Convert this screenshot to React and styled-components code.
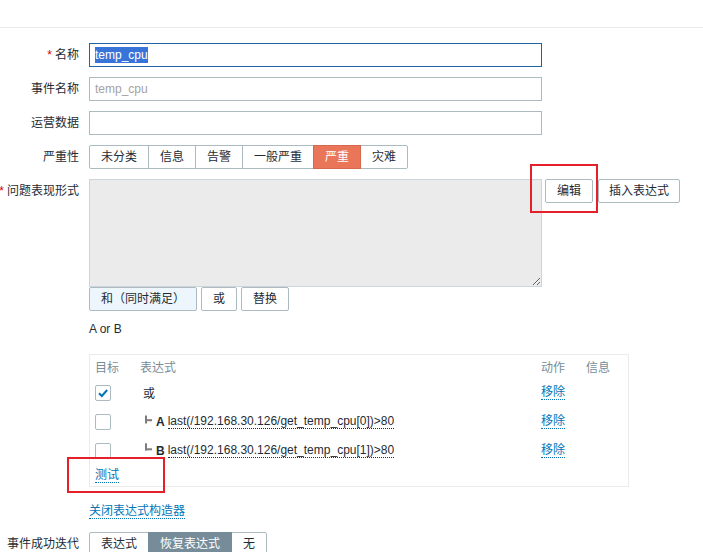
import React from 'react';
import styled, { createGlobalStyle } from 'styled-components';

const FONT = `"Liberation Sans", Arial, "Noto Sans CJK SC", sans-serif`;

const Global = createGlobalStyle`
  html, body { margin: 0; padding: 0; background: #fff; }
  body { font-family: ${FONT}; font-size: 12px; color: #1f2c33; }
  * { box-sizing: border-box; }
`;

const Page = styled.div`
  position: relative;
  width: 703px;
  height: 552px;
  overflow: hidden;
`;

const TopBar = styled.div`
  height: 28px;
  border-bottom: 1px solid #ebebeb;
`;

const Form = styled.div`
  display: flex;
  flex-direction: column;
  gap: 10px;
  padding-top: 15px;
`;

const Row = styled.div`
  display: flex;
  align-items: flex-start;
  gap: 10px;
`;

const Label = styled.div`
  width: 79px;
  flex-shrink: 0;
  text-align: right;
  line-height: 24px;
  white-space: nowrap;
  direction: rtl;
  overflow: visible;
`;

const LabelInner = styled.span`
  direction: ltr;
  unicode-bidi: isolate;
`;

const Req = styled.span`
  color: #d40000;
  margin-right: 3px;
`;

const Field = styled.div`
  display: flex;
  flex-direction: column;
  align-items: flex-start;
  padding-bottom: ${p => p.$pb || 0}px;
`;

const TextBox = styled.div`
  width: 453px;
  height: 24px;
  border: 1px solid ${p => (p.$focus ? '#1f65a6' : '#acbbc2')};
  background: #fff;
  padding: 0 5px;
  display: flex;
  align-items: center;
  color: ${p => (p.$placeholder ? '#a3a3a3' : '#1f2c33')};
  font-family: ${FONT};
  font-size: 12px;
`;

const Selected = styled.span`
  background: #3874d8;
  color: #fff;
  line-height: 16px;
`;

const Seg = styled.div`
  display: flex;
`;

const SegBtn = styled.div`
  height: 24px;
  line-height: 22px;
  padding: 0 11px;
  border: 1px solid ${p => (p.$active ? p.$border : '#acbbc2')};
  margin-left: -1px;
  background: ${p => (p.$active ? p.$bg : '#fff')};
  color: ${p => (p.$active ? '#fff' : '#1f2c33')};
  position: relative;
  z-index: ${p => (p.$active ? 1 : 0)};
  white-space: nowrap;
  &:first-child { margin-left: 0; border-radius: 2px 0 0 2px; }
  &:last-child { border-radius: 0 2px 2px 0; }
`;

const ExprLine = styled.div`
  display: flex;
  align-items: flex-start;
`;

const Area = styled.textarea`
  display: block;
  width: 453px;
  height: 108px;
  margin: 0;
  background: #ebebeb;
  border: 1px solid #ccd5d9;
  resize: both;
  font-family: ${FONT};
  font-size: 12px;
  outline: none;
`;

const Btn = styled.div`
  height: 24px;
  line-height: 22px;
  padding: 0 ${p => p.$px ?? 11}px;
  border: 1px solid #acbbc2;
  border-radius: 2px;
  background: ${p => p.$bg || '#fff'};
  color: #1f2c33;
  margin-left: ${p => p.$ml || 0}px;
  white-space: nowrap;
`;

const OpRow = styled.div`
  display: flex;
  gap: 4px;
`;

const ExprText = styled.div`
  margin-top: 11px;
  line-height: 14px;
`;

const Box = styled.div`
  margin-top: 18px;
  width: 540px;
  border: 1px solid #ebebeb;
  padding: 3px 5px 1px;
  display: grid;
  grid-template-columns: 45px 401px 45px 1fr;
`;

const Head = styled.div`
  height: 20px;
  line-height: 20px;
  color: #768d99;
`;

const Cell = styled.div`
  height: ${p => p.$h || 29}px;
  display: flex;
  align-items: center;
  padding-left: ${p => p.$pl || 0}px;
  white-space: nowrap;
`;

const CheckBox = styled.span`
  display: inline-block;
  width: 16px;
  height: 16px;
  border: 1px solid #acbbc2;
  border-radius: 2px;
  background: #fff;
  svg { display: block; }
`;

const Link = styled.span`
  color: ${p => (p.$dark ? '#1f2c33' : '#0275b8')};
  border-bottom: 1px dotted ${p => (p.$dark ? '#1f2c33' : '#0275b8')};
  line-height: 14px;
  cursor: pointer;
`;

const Bold = styled.b`
  margin: 0 3px 0 4px;
  font-weight: bold;
`;

const Tree = styled.svg`
  display: block;
  flex-shrink: 0;
`;

const CloseLink = styled.div`
  margin-top: 16px;
  line-height: 16px;
`;

const Annot = styled.div`
  position: absolute;
  border: 2px solid #e5202a;
  pointer-events: none;
`;

function Check({ on }) {
  return (
    <CheckBox>
      {on && (
        <svg width="14" height="14" viewBox="0 0 14 14">
          <path d="M3 7.2 L5.8 10 L11.2 4" fill="none" stroke="#0275b8" strokeWidth="2" />
        </svg>
      )}
    </CheckBox>
  );
}

function TreeMid() {
  return (
    <Tree width="7" height="16" viewBox="0 0 7 16">
      <rect x="0" y="1.5" width="2" height="8" fill="#7d7d7d" />
      <rect x="0" y="5.2" width="7" height="2" fill="#7d7d7d" />
    </Tree>
  );
}

function TreeEnd() {
  return (
    <Tree width="7" height="16" viewBox="0 0 7 16">
      <rect x="0" y="0.3" width="2" height="7.2" fill="#7d7d7d" />
      <rect x="0" y="5.3" width="7" height="2" fill="#7d7d7d" />
    </Tree>
  );
}

const severities = [
  { t: '未分类' },
  { t: '信息' },
  { t: '告警' },
  { t: '一般严重' },
  { t: '严重', active: true },
  { t: '灾难' },
];

const rows = [
  { on: true, op: '或' },
  { tree: 'mid', letter: 'A', expr: 'last(/192.168.30.126/get_temp_cpu[0])>80' },
  { tree: 'end', letter: 'B', expr: 'last(/192.168.30.126/get_temp_cpu[1])>80' },
];

export default function App() {
  return (
    <Page>
      <Global />
      <TopBar />
      <Form>
        <Row>
          <Label><LabelInner><Req>*</Req>名称</LabelInner></Label>
          <Field>
            <TextBox $focus><Selected>temp_cpu</Selected></TextBox>
          </Field>
        </Row>
        <Row>
          <Label><LabelInner>事件名称</LabelInner></Label>
          <Field>
            <TextBox $placeholder>temp_cpu</TextBox>
          </Field>
        </Row>
        <Row>
          <Label><LabelInner>运营数据</LabelInner></Label>
          <Field>
            <TextBox />
          </Field>
        </Row>
        <Row>
          <Label><LabelInner>严重性</LabelInner></Label>
          <Field>
            <Seg>
              {severities.map(s => (
                <SegBtn key={s.t} $active={s.active} $bg="#e97659" $border="#d6694d">{s.t}</SegBtn>
              ))}
            </Seg>
          </Field>
        </Row>
        <Row>
          <Label><LabelInner><Req>*</Req>问题表现形式</LabelInner></Label>
          <Field $pb={3}>
            <ExprLine>
              <Area readOnly defaultValue="" />
              <Btn $ml={3}>编辑</Btn>
              <Btn $ml={5} $px={10}>插入表达式</Btn>
            </ExprLine>
            <OpRow>
              <Btn $bg="#eef6fd">和（同时满足）</Btn>
              <Btn>或</Btn>
              <Btn>替换</Btn>
            </OpRow>
            <ExprText>A or B</ExprText>
            <Box>
              <Head>目标</Head>
              <Head>表达式</Head>
              <Head>动作</Head>
              <Head>信息</Head>
              {rows.map((r, i) => (
                <React.Fragment key={i}>
                  <Cell><Check on={r.on} /></Cell>
                  {r.op ? (
                    <Cell $pl={3}>{r.op}</Cell>
                  ) : (
                    <Cell $pl={5}>
                      {r.tree === 'mid' ? <TreeMid /> : <TreeEnd />}
                      <Bold>{r.letter}</Bold>
                      <Link $dark>{r.expr}</Link>
                    </Cell>
                  )}
                  <Cell><Link>移除</Link></Cell>
                  <Cell />
                </React.Fragment>
              ))}
              <Cell $h={20}><Link>测试</Link></Cell>
            </Box>
            <CloseLink><Link>关闭表达式构造器</Link></CloseLink>
          </Field>
        </Row>
        <Row>
          <Label><LabelInner>事件成功迭代</LabelInner></Label>
          <Field>
            <Seg>
              <SegBtn>表达式</SegBtn>
              <SegBtn $active $bg="#768d99" $border="#768d99">恢复表达式</SegBtn>
              <SegBtn>无</SegBtn>
            </Seg>
          </Field>
        </Row>
      </Form>
      <Annot style={{ left: 530, top: 164, width: 68, height: 49 }} />
      <Annot style={{ left: 67, top: 457, width: 98, height: 36 }} />
    </Page>
  );
}
